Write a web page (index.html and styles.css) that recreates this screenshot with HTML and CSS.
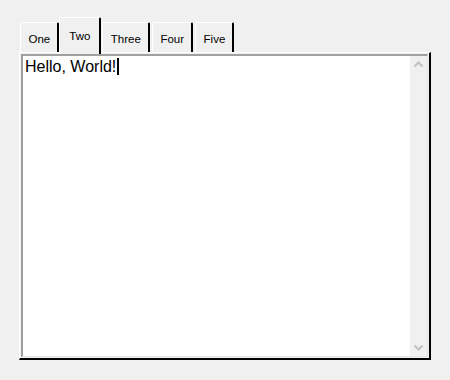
FILE: index.html
```html
<!DOCTYPE html>
<html lang="en">
<head>
  <meta charset="UTF-8">
  <title>Tabs</title>
  <link rel="stylesheet" href="styles.css">
</head>
<body>
  <div class="window">
    <div class="tabs">
      <div class="tab">One</div>
      <div class="tab selected">Two</div>
      <div class="tab">Three</div>
      <div class="tab">Four</div>
      <div class="tab">Five</div>
    </div>
    <div class="panel">
      <div class="editor">
        <div class="text">Hello, World!<span class="caret"></span></div>
        <div class="scrollbar">
          <svg width="17" height="17" viewBox="0 0 17 17"><path d="M4.5 10.5 L8.5 6.5 L12.5 10.5" fill="none" stroke="#c0c0c0" stroke-width="2"/></svg>
          <svg width="17" height="17" viewBox="0 0 17 17"><path d="M4.5 6.5 L8.5 10.5 L12.5 6.5" fill="none" stroke="#c0c0c0" stroke-width="2"/></svg>
        </div>
      </div>
    </div>
  </div>
</body>
</html>
```

FILE: styles.css
```css
body {
  margin: 0;
  background: #f0f0f0;
  font-family: "Liberation Sans", Arial, sans-serif;
  color: #000;
}
.window {
  padding: 17px 0 0 19px;
}
.tabs {
  display: flex;
  align-items: flex-end;
  height: 35px;
  padding-left: 1px;
}
.tab {
  box-sizing: border-box;
  height: 30px;
  padding: 10px 7px 0 7.5px;
  font-size: 11.5px;
  background: #f0f0f0;
  border-top: 1px solid #fff;
  border-left: 1px solid #fff;
  border-right: 2px solid #000;
  border-radius: 2px 2px 0 0;
  margin-right: 2px;
}
.tab.selected {
  height: 37px;
  padding-top: 12px;
  margin: 0 2px -2px -2px;
  padding-left: 9px;
  padding-right: 9px;
  position: relative;
  z-index: 1;
}
.tab.selected + .tab {
  margin-left: -1px;
}
.panel {
  box-sizing: border-box;
  width: 412px;
  height: 308px;
  border-top: 1px solid #fff;
  border-left: 1px solid #fff;
  border-right: 2px solid #000;
  border-bottom: 2px solid #000;
  padding: 1px;
}
.editor {
  box-sizing: border-box;
  height: 100%;
  display: flex;
  background: #fff;
  border-top: 2px solid #a0a0a0;
  border-left: 2px solid #a0a0a0;
  border-right: 1px solid #e3e3e3;
  border-bottom: 1px solid #e3e3e3;
}
.text {
  flex: 1;
  padding: 2px 0 0 2px;
  font-size: 16px;
  line-height: 18px;
}
.caret {
  display: inline-block;
  width: 2px;
  height: 17px;
  background: #000;
  vertical-align: -3px;
  margin-left: 1px;
}
.scrollbar {
  width: 17px;
  background: #f0f0f0;
  display: flex;
  flex-direction: column;
  justify-content: space-between;
}
.scrollbar svg {
  display: block;
}
```
